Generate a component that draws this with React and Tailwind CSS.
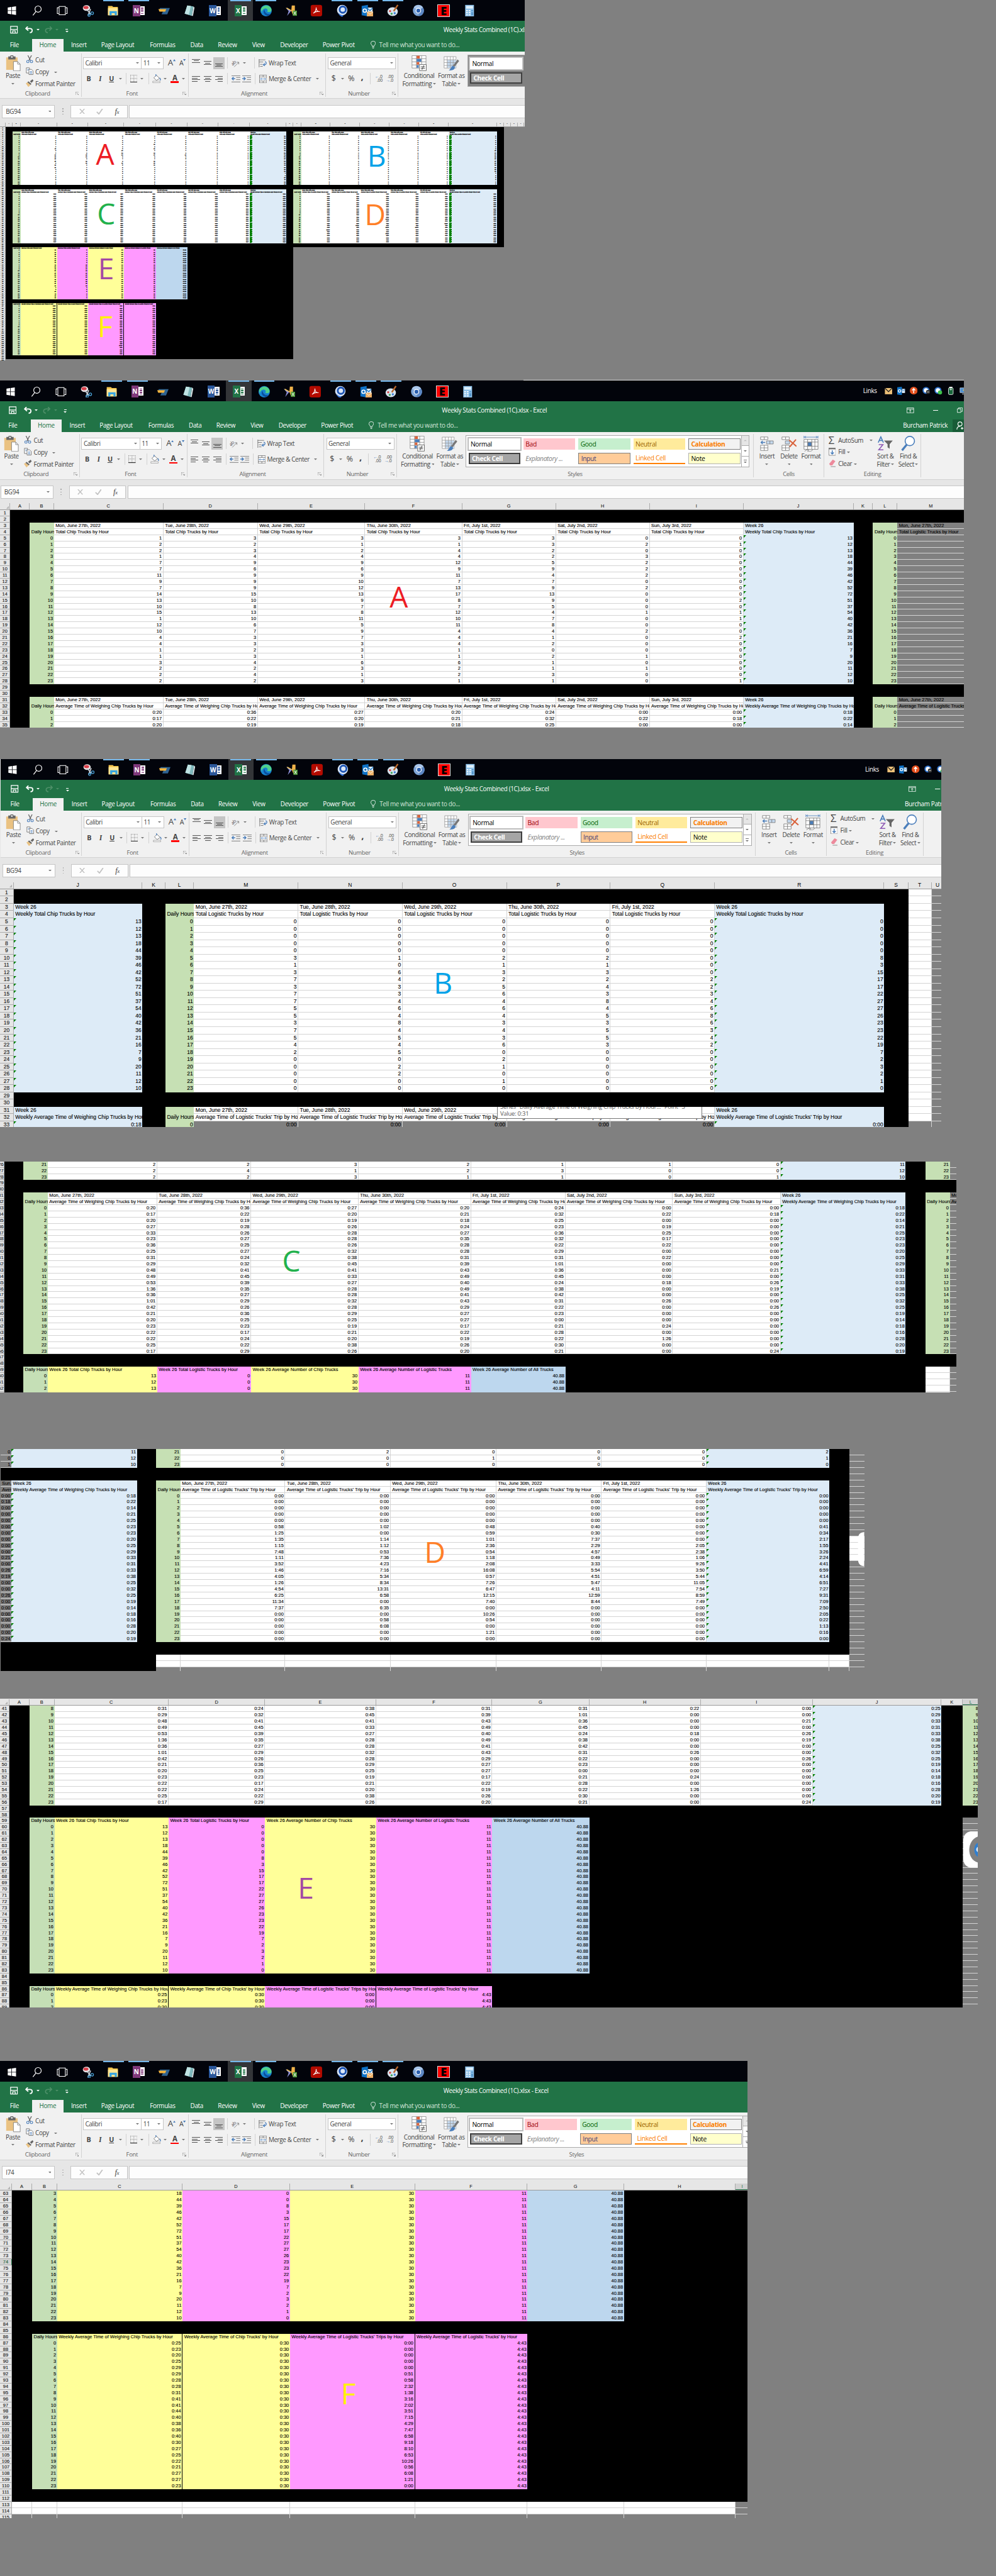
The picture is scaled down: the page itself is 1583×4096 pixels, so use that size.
import React from "react";

/* ---------- workbook data ---------- */
const nums = (s) => s.split(" ");
const mins = (s) => s.split(" ").map((v) => (v.includes(":") ? v : "0:" + v));
const fill = (v) => Array(24).fill(v);

const chip = {
  C: nums("1 2 2 1 7 7 11 9 7 14 13 10 15 1 12 10 4 4 1 1 3 2 2 2"),
  D: nums("3 2 3 4 9 6 9 9 9 15 10 8 13 10 6 7 3 3 2 3 4 2 4 2"),
  E: nums("3 1 2 4 9 6 9 10 12 13 9 7 8 11 5 9 7 3 3 1 6 3 1 3"),
  F: nums("3 1 4 4 12 9 11 7 13 17 8 7 12 10 11 4 4 4 1 1 6 2 2 1"),
  G: nums("3 3 2 2 5 9 4 7 9 13 9 5 4 7 8 4 1 2 0 2 1 1 3 1"),
  H: nums("0 2 0 3 2 2 2 0 2 0 0 0 1 0 0 2 0 0 0 1 0 1 0 0"),
  I: nums("0 1 0 0 0 0 0 0 0 0 2 0 1 1 0 0 2 0 0 0 0 0 0 1"),
  J: nums("13 12 13 18 44 39 46 42 52 72 51 37 54 40 42 36 21 16 7 9 20 11 12 10"),
  M: nums("0 0 0 0 0 3 1 3 7 3 7 7 5 5 3 7 5 4 2 0 0 0 0 0"),
  N: nums("0 0 0 0 0 1 0 6 4 3 3 4 6 4 8 4 5 4 5 0 2 2 0 0"),
  O: nums("0 0 0 0 0 2 1 3 2 5 6 4 6 4 3 4 3 6 0 2 1 0 1 0"),
  P: nums("0 0 0 0 0 2 1 3 2 4 3 8 4 5 3 5 5 3 0 0 0 0 0 0"),
  Q: nums("0 0 0 0 0 0 0 0 2 2 3 4 6 8 6 3 4 2 0 0 0 0 0 0"),
  R: nums("0 0 0 0 0 8 3 15 17 17 22 27 27 26 23 23 22 19 7 2 3 2 1 0"),
};
const avg = {
  C: mins("20 17 20 27 33 23 36 25 31 29 48 49 53 1:36 36 1:01 42 21 20 23 22 22 25 17"),
  D: mins("36 22 19 28 26 27 25 27 24 32 41 45 39 35 27 29 26 36 25 23 17 24 22 29"),
  E: mins("27 20 19 26 28 28 26 32 38 45 41 33 27 28 28 32 28 29 25 19 21 20 38 26"),
  F: mins("20 21 18 24 27 35 28 28 31 39 43 49 40 49 41 43 29 27 27 17 22 19 26 20"),
  G: mins("24 32 25 23 36 32 22 29 31 1:01 36 45 24 38 42 31 22 23 00 21 28 22 30 21"),
  H: mins("00 22 00 19 25 17 22 00 22 00 00 00 18 00 00 26 00 00 00 24 00 1:26 00 00"),
  I: mins("00 18 00 00 00 00 00 00 00 00 21 00 26 19 00 00 26 00 00 00 00 00 00 24"),
  J: mins("18 22 14 21 25 23 23 20 25 29 33 31 33 38 25 32 25 19 14 18 16 28 20 19"),
  M: mins("00 00 00 00 00 58 1:25 1:35 1:15 7:48 1:11 3:52 1:46 4:05 1:26 4:54 6:25 11:34 7:37 00 00 00 00 00"),
  N: mins("00 00 00 00 00 1:02 00 1:14 1:12 53 7:36 4:23 7:16 5:34 8:34 13:31 6:58 00 6:35 00 58 6:08 00 00"),
  O: mins("00 00 00 00 00 48 59 1:01 2:36 54 1:18 2:08 16:08 57 7:26 6:47 12:15 7:40 00 10:26 54 00 1:21 00"),
  P: mins("00 00 00 00 00 40 30 7:37 2:29 4:57 49 3:33 5:54 4:51 5:47 4:11 12:59 8:44 00 00 00 00 00 00"),
  Q: mins("00 00 00 00 00 00 00 00 2:05 2:38 1:06 9:26 3:50 5:44 11:05 7:54 8:59 7:49 00 00 00 00 00 00"),
  R: mins("00 00 00 00 00 41 34 2:17 1:55 3:26 2:24 4:41 6:59 4:14 6:51 7:27 9:31 7:09 2:50 2:05 22 1:13 16 00"),
};
const totals = {
  title: {
    C: "Week 26 Total Chip Trucks by Hour",
    D: "Week 26 Total Logistic Trucks by Hour",
    E: "Week 26 Average Number of Chip Trucks",
    F: "Week 26 Average Number of Logistic Trucks",
    G: "Week 26 Average Number of All Trucks",
  },
  kind: { B: "moss", C: "yellow", D: "pink", E: "yellow", F: "pink", G: "sky" },
  data: { C: chip.J, D: chip.R, E: fill("30"), F: fill("11"), G: fill("40.88") },
};
const weekly = {
  title: {
    C: "Weekly Average Time of Weighing Chip Trucks by Hour",
    D: "Weekly Average Time of Chip Trucks' by Hour",
    E: "Weekly Average Time of Logistic Trucks' Trips by Hour",
    F: "Weekly Average Time of Logistic Trucks' by Hour",
  },
  kind: { B: "moss", C: "yellow", D: "yellow", E: "pink", F: "pink" },
  data: {
    C: mins("25 23 20 25 29 29 28 28 31 41 41 44 40 38 36 40 30 27 25 22 21 27 27 23"),
    D: fill("0:30"),
    E: mins("00 00 00 00 00 51 58 2:32 1:38 3:16 2:02 3:51 7:15 4:29 7:47 6:58 9:18 8:10 6:53 10:26 56 6:08 1:21 00"),
    F: fill("4:43"),
  },
};
const dayOf = {
  C: "Mon, June 27th, 2022", D: "Tue, June 28th, 2022", E: "Wed, June 29th, 2022",
  F: "Thu, June 30th, 2022", G: "Fri, July 1st, 2022", H: "Sat, July 2nd, 2022",
  I: "Sun, July 3rd, 2022", J: "Week 26", M: "Mon, June 27th, 2022",
  N: "Tue, June 28th, 2022", O: "Wed, June 29th, 2022", P: "Thu, June 30th, 2022",
  Q: "Fri, July 1st, 2022", R: "Week 26",
};

function dayBlock(row, top, col, data, label) {
  if ("AKS".includes(col)) return { kind: "black" };
  if (col > "S") return { kind: "white" };
  const h = row - top - 2;
  if ("BL".includes(col))
    return { kind: "green", text: h >= 0 ? String(h) : h === -1 ? "Daily Hours" : "", left: h < 0 };
  const kind = "JR".includes(col) ? "blue" : "white";
  if (h === -2) return { kind, text: dayOf[col], left: true };
  if (h === -1) return { kind, text: label(col), left: true };
  return { kind, text: data[col][h], flag: kind === "blue" };
}

function summaryBlock(row, top, col, block, ruled) {
  const kind = block.kind[col];
  if (!kind) return { kind: "black" };
  const h = row - top - 1;
  if (col === "B") return { kind, text: h < 0 ? "Daily Hours" : String(h), left: h < 0 };
  const rule = ruled && "CE".includes(col);
  if (h < 0) return { kind, text: block.title[col], left: true, rule };
  return { kind, text: block.data[col][h], rule };
}

function cellAt(row, col) {
  if (row >= 3 && row <= 28)
    return dayBlock(row, 3, col, chip, (c) =>
      (c === "J" || c === "R" ? "Weekly " : "") + (c < "K" ? "Total Chip Trucks by Hour" : "Total Logistic Trucks by Hour"));
  if (row >= 31 && row <= 56)
    return dayBlock(row, 31, col, avg, (c) =>
      (c === "J" || c === "R" ? "Weekly " : "") +
      (c < "K" ? "Average Time of Weighing Chip Trucks by Hour" : "Average Time of Logistic Trucks' Trip by Hour"));
  if (row <= 58) return { kind: col > "S" ? "white" : "black" };
  if (col > "K" || row > 112) return { kind: "white" };
  if (row <= 83) return summaryBlock(row, 59, col, totals, false);
  if (row >= 86 && row <= 110) return summaryBlock(row, 86, col, weekly, true);
  return { kind: "black" };
}

/* ---------- sheet ---------- */
const kindClass = {
  black: "bg-black",
  green: "bg-[#c6e0b4]",
  moss: "bg-[#c5dfb6]",
  blue: "bg-[#ddebf7]",
  sky: "bg-[#bdd7ee]",
  yellow: "bg-[#ffff99]",
  pink: "bg-[#ff99ff]",
  white: "bg-white border-r border-b border-[#d4d4d4]",
  plain: "bg-white",
  ghost: "border-b border-[#d4d4d4]",
  blank: "border-b border-[#d4d4d4]",
  column: "border-r border-[#d4d4d4]",
  none: "",
};

function Cell({ cell, width, mini }) {
  const kind = mini && cell.kind === "white" ? "plain" : cell.kind;
  return (
    <div
      className={`relative shrink-0 overflow-hidden whitespace-nowrap ${kindClass[kind]} ${
        mini ? "px-[2px]" : cell.left ? "pl-[3px]" : "pr-[2px]"
      } ${cell.left ? "text-left" : "text-right"} ${cell.rule ? "border-r border-black" : ""}`}
      style={{ width }}
    >
      {kind === "blank" || kind === "none" ? "" : cell.text}
      {cell.flag && (
        <svg className={mini ? "absolute left-[1px] top-0 h-[4px] w-[5px]" : "absolute left-0 top-0 h-[5px] w-[5px]"} viewBox="0 0 5 5" preserveAspectRatio="none">
          <path d={mini ? "M0 0h5v2L3 5H0z" : "M0 0h5L0 5z"} fill="#008000" />
        </svg>
      )}
    </div>
  );
}

function ColumnHeads({ cols, gutter, height, active, mini }) {
  return (
    <div className="flex shrink-0 items-end border-b border-[#9b9b9b] bg-[#e6e6e6]" style={{ height }}>
      <div className={`flex shrink-0 items-end justify-end ${mini ? "h-[7px]" : "h-[12px]"} border-r border-[#ababab] p-[2px]`} style={{ width: gutter }}>
        {!mini && gutter > 10 && (
          <svg className="h-[6px] w-[5px]" viewBox="0 0 5 6"><path d="M5 0v6H0z" fill="#b5b5b5" /></svg>
        )}
      </div>
      {cols.map(([name, width]) => (
        <div
          key={name}
          className={`shrink-0 overflow-hidden border-r border-[#ababab] text-center ${
            mini ? "h-[7px] text-[3px] font-bold leading-[6px]" : "h-[12px] leading-[11px]"
          } ${active === name ? "border-b-2 border-b-[#217346] bg-[#d2d2d2] text-[#217346]" : ""}`}
          style={{ width }}
        >
          {name}
        </div>
      ))}
    </div>
  );
}

function Sheet({ cols, from, to, rowHeight, gutter, override, activeRow, mini, gutterEnd }) {
  const rows = [];
  for (let r = from; r <= to; r++) rows.push(r);
  return (
    <div
      className={`flex flex-col ${mini ? "[-webkit-text-stroke:0.55px_black]" : "[-webkit-text-stroke:0.15px_black]"}`}
      style={{ lineHeight: rowHeight + "px" }}
    >
      {rows.map((r) => (
        <div key={r} className="flex shrink-0" style={{ height: rowHeight }}>
          {gutter > 0 && (
            <div
              className={`flex shrink-0 overflow-hidden border-b border-r border-[#ababab] ${
                activeRow === r ? "border-r-2 border-r-[#217346] bg-[#d2d2d2] text-[#217346]" : "bg-[#e6e6e6] text-[#222]"
              } ${gutterEnd ? "justify-end" : "justify-center"} ${mini ? "border-b-[#d0d0d0]" : ""}`}
              style={{ width: gutter }}
            >
              {r}
            </div>
          )}
          {cols.map(([name, width]) => {
            const base = cellAt(r, name);
            const kind = override ? override(r, name) : null;
            return <Cell key={name} cell={kind ? { ...base, kind, flag: kind === base.kind && base.flag } : base} width={width} mini={mini} />;
          })}
        </div>
      ))}
    </div>
  );
}

/* turns column edges into [name, width] pairs */
function columns(first, edges) {
  return edges.slice(1).map((x, i) => [String.fromCharCode(first.charCodeAt(0) + i), x - edges[i]]);
}

/* ---------- taskbar ---------- */
const Badge = ({ color, letter }) => (
  <span className="flex h-[24px] w-[23px] items-center">
    <span className={`flex h-[22px] w-[14px] items-center justify-center text-[12px] font-bold text-white ${color}`}>{letter}</span>
    <span className="flex h-[17px] w-[9px] flex-col justify-evenly border border-white bg-white px-px">
      <i className={`h-[2px] ${color}`} /><i className={`h-[2px] ${color}`} /><i className={`h-[2px] ${color}`} /><i className={`h-[2px] ${color}`} />
    </span>
  </span>
);
const I24 = ({ children }) => <svg className="h-[24px] w-[24px]" viewBox="0 0 24 24" fill="none">{children}</svg>;

const taskIcons = [
  [<I24><path d="M4 6l7-1v6.500H4zM12 4.800l8-1.200v7.900h-8zM4 12.500h7V19l-7-1zM12 12.500h8v7.900l-8-1.200z" fill="#fff" /></I24>],
  [<I24><circle cx="14" cy="9" r="6" stroke="#fff" strokeWidth="1.4" /><path d="M10 13.500L4 21" stroke="#fff" strokeWidth="1.5" /></I24>],
  [<I24><path d="M6 4h12v16H6zM5 6.500H2.500v11H5M19 6.500h2.500v11H19" stroke="#fff" strokeWidth="1.3" /></I24>],
  [<I24><ellipse cx="9" cy="7" rx="7" ry="5.500" fill="#e8e4e6" /><ellipse cx="8" cy="6" rx="5" ry="3" fill="#d9404a" /><path d="M10 10l7 9M17 9l-5 12" stroke="#cfd6dd" strokeWidth="2" /><circle cx="20" cy="17" r="2.500" stroke="#4ba3d8" strokeWidth="1.600" /><circle cx="14" cy="21" r="2.200" stroke="#4ba3d8" strokeWidth="1.600" /></I24>],
  [<I24><path d="M2 3h8l2 2h9v16H2z" fill="#f5c64f" /><path d="M2 7h19v14H2z" fill="#ffe694" /><path d="M5 21v-8h14v8h-4v-4H9v4z" fill="#37a5e0" /></I24>, 1],
  [<Badge color="bg-[#80397b]" letter="N" />, 1],
  [<I24><path d="M4 7h19l-5 12H7l3-6H2z" fill="#2f6391" /><path d="M1 9h15l-2 5H3z" fill="#f6b53c" /></I24>],
  [<I24><path d="M8 2l12 2-3 18-14-4z" fill="#7fb9bd" /><path d="M8 2l7 1-4 17-8-2z" fill="#bfe3e3" /><path d="M20 4l2 2-3 16-2 0z" fill="#e9eef0" /></I24>],
  [<Badge color="bg-[#2b579a]" letter="W" />],
  [<Badge color="bg-[#217346]" letter="X" />, 2],
  [<I24><circle cx="12" cy="12" r="11" fill="#1683cf" /><path d="M2 9C5 1 18-1 22 8c2 6-3 8-8 6 2-2 1-6-3-6-4 0-8 4-7 9" fill="#4fd08a" /><path d="M9 10c-4 4-1 11 6 12 3 0 5-2 6-4-5 2-12-1-12-8z" fill="#0b4f9e" /></I24>, 3],
  [<I24><path d="M13 2h6v10l4 8h-8l-3-8z" fill="#f0b34a" /><path d="M1 6l11 6-8 10 3-9z" fill="#8d8fd6" /><path d="M3 7l9 5" stroke="#f4c75a" strokeWidth="2" /><path d="M15 12h8v10h-8z" fill="#4e9a3b" /><path d="M17 14l4 6M21 14l-4 6" stroke="#fff" strokeWidth="1.200" /></I24>],
  [<I24><rect x="1" y="1" width="22" height="22" rx="4" fill="#b30b00" /><path d="M6 17c4-2 6-7 5.500-11 0 5 3 8 7 8-4-1-9 0-12.500 3z" stroke="#fff" strokeWidth="1.400" /></I24>],
  [<I24><circle cx="12" cy="11" r="10" fill="#dbe7f7" /><circle cx="13" cy="10" r="6" stroke="#1f56b5" strokeWidth="3.500" /><path d="M4 15c3 5 7 6 11 6l-3 3c-4-1-7-4-8-9z" fill="#3c7be0" /></I24>, 1],
  [<I24><path d="M1 3l12-2v22L1 21z" fill="#0f72c6" /><circle cx="7" cy="12" r="3.200" stroke="#fff" strokeWidth="2" /><path d="M13 6h9v11h-9z" fill="#dcebf8" /><path d="M13 8l4 4 5-5" stroke="#0f72c6" strokeWidth="1.500" /><path d="M11 14h12v9H11z" fill="#f0b268" /><path d="M11 14l6 5 6-5" stroke="#fff" /></I24>, 1],
  [<I24><ellipse cx="11" cy="14" rx="10" ry="8.500" fill="#d7e4ee" /><circle cx="6" cy="13" r="2" fill="#d64545" /><circle cx="9" cy="18" r="2" fill="#3aa655" /><circle cx="15" cy="17" r="2" fill="#3d7fd6" /><path d="M21 1l-8 12" stroke="#b8672c" strokeWidth="3" /></I24>, 1],
  [<I24><circle cx="12" cy="12" r="10.500" fill="#7fa6d8" /><path d="M12 12L3 6a10.500 10.500 0 0118 0z" fill="#a9c6ea" /><path d="M12 12l9-6a10.500 10.500 0 01-8 16.500z" fill="#5c87c4" /><circle cx="12" cy="12" r="4.500" fill="#2b5fae" stroke="#fff" strokeWidth="1.500" /></I24>],
  [<span className="flex h-[24px] w-[24px] items-center justify-center border border-[#ddd] bg-[#f00] text-[22px] font-black leading-none text-black">E</span>],
  [<I24><rect x="4" y="1" width="17" height="22" fill="#8fc2ea" /><path d="M6 3h13v5H6z" fill="#dff0fb" /><path d="M6 11h3v2H6zM11 11h3v2h-3zM6 15h3v2H6zM11 15h3v2h-3zM6 19h3v2H6zM11 19h3v2h-3z" fill="#fff" /><path d="M16 11h3v2h-3zM16 15h3v6h-3z" fill="#4d8fc6" /></I24>],
];

function Taskbar() {
  return (
    <div className="flex h-[40px] shrink-0 items-stretch bg-[#02040b]">
      {taskIcons.map(([icon, mark], i) => (
        <div
          key={i}
          className={`flex shrink-0 flex-col items-center ${i === 0 ? "w-[47px]" : "w-[49px]"} ${mark === 2 ? "bg-[#333538]" : ""}`}
        >
          <div className={`h-[2px] w-[40px] shrink-0 ${mark ? "bg-[#76b9ed]" : ""}`} />
          <div className="flex flex-1 items-center">{icon}</div>
        </div>
      ))}
      <div className="ml-[738px] flex shrink-0 items-center gap-[9px]">
        <span className="w-[33px] text-[12px] tracking-[-0.4px] text-white">Links</span>
        <svg className="h-[12px] w-[15px]" viewBox="0 0 14 12"><path d="M0 0h14v12H0z" fill="#ecc078" /><path d="M0 0l7 7 7-7" stroke="#222" fill="none" strokeWidth="1.500" /></svg>
        <svg className="h-[16px] w-[15px]" viewBox="0 0 15 16"><path d="M0 1l9-1v16l-9-1z" fill="#0f72c6" /><circle cx="4.500" cy="8" r="2.500" fill="none" stroke="#fff" strokeWidth="1.500" /><path d="M9 4h6v8H9z" fill="#dcebf8" /><path d="M9 5l3 3 3-3" stroke="#0f72c6" fill="none" /></svg>
        <svg className="h-[15px] w-[15px]" viewBox="0 0 15 15"><circle cx="7.500" cy="7.500" r="7.500" fill="#e5501e" /><path d="M7.500 12V4M4.500 7l3-3.500 3 3.500" stroke="#fff" strokeWidth="1.800" fill="none" /></svg>
        <svg className="h-[15px] w-[15px]" viewBox="0 0 15 15"><circle cx="7" cy="7" r="5.500" fill="#fff" stroke="#2d6fc8" strokeWidth="2.500" /><circle cx="11" cy="10" r="4" fill="#333" /><path d="M9 10h4" stroke="#fff" /></svg>
        <svg className="h-[15px] w-[15px]" viewBox="0 0 15 15"><circle cx="7" cy="7" r="5.500" fill="#fff" stroke="#2d6fc8" strokeWidth="2.500" /><circle cx="11" cy="11" r="4" fill="#3ec24a" /></svg>
        <svg className="h-[16px] w-[15px]" viewBox="0 0 15 16"><rect x="3" y="2" width="9" height="13" rx="2" fill="#17663a" stroke="#fff" /><path d="M5 0h5v2H5zM5 5h5M7.500 3v4" stroke="#fff" fill="#fff" /></svg>
        <svg className="h-[14px] w-[17px]" viewBox="0 0 17 14"><path d="M1 1h15v9H1z" fill="#4e8fd0" stroke="#cfd6dd" /><path d="M5 12h7v2H5z" fill="#cfd6dd" /><path d="M9 3l-3 3h3l-1 3 4-4H9z" fill="#ffd84a" /></svg>
      </div>
    </div>
  );
}

/* ---------- ribbon pieces ---------- */
const Caret = ({ tone = "#777" }) => (
  <svg className="h-[3px] w-[6px] shrink-0" viewBox="0 0 6 3"><path d="M0 0h6L3 3z" fill={tone} /></svg>
);
const Sep = () => <div className="mx-[5px] h-[22px] w-px shrink-0 bg-[#d2d2d2]" />;
const Slot = ({ className, children }) => <div className={`flex shrink-0 items-center justify-center ${className}`}>{children}</div>;
const Lines = ({ widths, align = "items-start" }) => (
  <div className={`flex w-[15px] flex-col gap-[2px] ${align}`}>
    {widths.map((w, i) => (
      <div key={i} className={`h-px bg-[#555] ${w ? "w-full" : "w-[10px]"}`} />
    ))}
  </div>
);

function Group({ className, label, launcher, children }) {
  return (
    <div className={`flex h-[92px] shrink-0 py-[4px] ${className}`}>
      <div className="flex flex-1 flex-col">
        <div className="h-[71px]">{children}</div>
        <div className="flex h-[14px] items-center text-[11.500px] leading-none tracking-[-0.4px] text-[#666]">
          <span className="flex-1 text-center">{label}</span>
          {launcher && (
            <svg className="mr-[4px] h-[7px] w-[7px]" viewBox="0 0 7 7"><path d="M0 6V0h6M3 3l3.500 3.500M6.500 3.500v3h-3" stroke="#777" fill="none" /></svg>
          )}
        </div>
      </div>
      <div className="w-px bg-[#d2d2d2]" />
    </div>
  );
}

const Stack = ({ className, icon, lines, caret }) => (
  <div className={`flex shrink-0 flex-col items-center pt-[2px] ${className}`}>
    <div className="flex h-[34px] items-center">{icon}</div>
    <div className="flex h-[15px] items-center">{lines[0]}</div>
    <div className="flex h-[16px] items-center gap-[2px]">{lines[1]}{caret && <Caret />}</div>
  </div>
);

const StyleBox = ({ className, children }) => (
  <div className={`flex h-[22px] w-[100px] shrink-0 items-center px-[4px] text-[12.500px] leading-none ${className}`}>{children}</div>
);

function Ribbon({ grayGallery }) {
  return (
    <div className="flex h-[92px] shrink-0 whitespace-nowrap border-b border-[#d2d2d2] bg-[#f1f1f1] text-[12px] tracking-[-0.45px] text-[#444]">
      <Group className="w-[157px]" label="Clipboard" launcher>
        <div className="flex pl-[9px]">
          <Stack
            className="w-[32px]"
            icon={<svg className="h-[31px] w-[29px]" viewBox="0 0 29 31"><path d="M1 4h22v24H1z" fill="#eac282" /><path d="M5 2h4a3 3 0 016 0h4v6H5z" fill="#666" /><circle cx="12" cy="3" r="1.500" fill="#fff" /><path d="M15 12h8l5 5v13H15z" fill="#fff" stroke="#777" /><path d="M23 12v5h5" fill="none" stroke="#777" /></svg>}
            lines={["Paste", ""]}
            caret
          />
          <div className="ml-[8px] flex flex-col pt-[4px]">
            <div className="flex h-[23px] items-start"><Slot className="mr-[3px] w-[16px]"><svg className="h-[15px] w-[15px]" viewBox="0 0 15 15" fill="none"><path d="M4 0l5 10M11 0L6 10" stroke="#666" strokeWidth="1.600" /><circle cx="4" cy="12" r="2.300" stroke="#4a7ebb" strokeWidth="1.400" /><circle cx="11" cy="12" r="2.300" stroke="#4a7ebb" strokeWidth="1.400" /></svg></Slot>Cut</div>
            <div className="flex h-[23px] items-start"><Slot className="mr-[3px] w-[16px]"><svg className="h-[15px] w-[15px]" viewBox="0 0 15 15" fill="#fff" stroke="#666"><path d="M1 1h6v10H1z" /><path d="M6 4h5l3 3v7H6z" /><path d="M8 8h4M8 10h4M8 12h4M3 4h3M3 6h2" stroke="#4a7ebb" /></svg></Slot>Copy<span className="ml-[10px] mt-[8px]"><Caret /></span></div>
            <div className="flex h-[20px] items-start"><Slot className="mr-[3px] w-[16px]"><svg className="h-[15px] w-[15px]" viewBox="0 0 15 15"><path d="M8 4l5-4 2 3-4 4z" fill="#666" /><path d="M5 4l6 5-2 2-6-5z" fill="#666" /><path d="M3 6l6 5-4 4-5-7z" fill="#eac282" /></svg></Slot>Format Painter</div>
          </div>
        </div>
      </Group>
      <Group className="w-[207px]" label="Font" launcher>
        <div className="flex flex-col pl-[3px]">
          <div className="mt-[7px] flex h-[23px] items-center">
            <div className="flex h-[23px] w-[113px] items-center justify-between border border-[#c6c6c6] bg-white pl-[3px] pr-[4px]">Calibri<Caret /></div>
            <div className="-ml-px flex h-[23px] w-[43px] items-center justify-between border border-[#c6c6c6] bg-white pl-[3px] pr-[4px]">11<Caret /></div>
            <Slot className="ml-[5px] w-[22px] text-[16px]">A<svg className="mb-[10px] h-[4px] w-[5px]" viewBox="0 0 5 4"><path d="M0 4h5L2.500 0z" fill="#4a7ebb" /></svg></Slot>
            <Slot className="w-[20px] text-[13px]">A<svg className="mb-[10px] h-[4px] w-[5px]" viewBox="0 0 5 4"><path d="M0 0h5L2.500 4z" fill="#4a7ebb" /></svg></Slot>
          </div>
          <div className="mt-[8px] flex h-[22px] items-center">
            <Slot className="w-[22px] text-[13px] font-bold">B</Slot>
            <Slot className="w-[22px] font-serif text-[14px] font-bold italic">I</Slot>
            <Slot className="w-[22px] text-[13px] font-bold underline">U</Slot>
            <Slot className="w-[12px]"><Caret /></Slot><Sep />
            <Slot className="w-[18px]"><svg className="h-[15px] w-[14px]" viewBox="0 0 14 15" stroke="#777" fill="none"><path d="M.5 0v14M7 0v14M13.500 0v14M0 .5h14M0 7h14" strokeDasharray="1 1" /><path d="M0 14h14" stroke="#333" strokeWidth="1.500" /></svg></Slot>
            <Slot className="w-[14px]"><Caret /></Slot><Sep />
            <Slot className="w-[20px]"><svg className="h-[17px] w-[17px]" viewBox="0 0 17 17"><path d="M3 7l5-5 6 6-6 4z" fill="#fff" stroke="#666" /><path d="M7 4V0M14 7c2 2 2 4 1 5" stroke="#4a7ebb" fill="none" strokeWidth="1.500" /><path d="M1 13.500h14v3H1z" fill="#fff" stroke="#999" /></svg></Slot>
            <Slot className="w-[14px]"><Caret /></Slot>
            <Slot className="w-[22px] flex-col text-[14px] font-bold leading-[13px]">A<i className="h-[3px] w-[16px] bg-[#f00]" /></Slot>
            <Slot className="w-[12px]"><Caret /></Slot>
          </div>
        </div>
      </Group>
      <Group className="w-[264px]" label="Alignment" launcher>
        <div className="flex flex-col pl-[3px]">
          <div className="mt-[7px] flex h-[23px] items-center">
            <Slot className="mb-[8px] w-[22px]"><Lines widths={[1, 0, 1]} align="items-center" /></Slot>
            <Slot className="w-[22px]"><Lines widths={[1, 0, 1]} align="items-center" /></Slot>
            <Slot className="h-[23px] w-[22px] bg-[#c5c5c5] pt-[8px]"><Lines widths={[1, 0, 1]} align="items-center" /></Slot>
            <Sep />
            <Slot className="w-[20px]"><svg className="h-[16px] w-[16px]" viewBox="0 0 16 16"><text x="0" y="9" fontSize="9" transform="rotate(-45 6 8)" fill="#444">ab</text><path d="M5 15L14 6M14 6v4M14 6h-4" stroke="#777" fill="none" /></svg></Slot>
            <Slot className="w-[14px]"><Caret /></Slot><div className="w-[7px]" /><Sep />
            <Slot className="w-[22px]"><svg className="h-[16px] w-[16px]" viewBox="0 0 16 16" fill="none" stroke="#666"><path d="M1 0v16M1 1.500h12M1 5.500h8M3 10h5M3 14h5" /><path d="M12 5c4 0 4 6-2 6M12 8l-3 3 3 2" stroke="#4a7ebb" strokeWidth="1.500" /></svg></Slot>
            <span>Wrap Text</span>
          </div>
          <div className="mt-[8px] flex h-[22px] items-center">
            <Slot className="w-[22px]"><Lines widths={[1, 0, 1, 0]} /></Slot>
            <Slot className="w-[22px]"><Lines widths={[1, 0, 1, 0]} align="items-center" /></Slot>
            <Slot className="w-[22px]"><Lines widths={[1, 0, 1, 0]} align="items-end" /></Slot>
            <Sep />
            <Slot className="w-[21px]"><svg className="h-[13px] w-[17px]" viewBox="0 0 17 13" fill="none" stroke="#666"><path d="M0 .5h17M9 4h8M9 8h8M0 12.500h17" /><path d="M7 6H1M4 3L1 6l3 3" stroke="#4a7ebb" strokeWidth="1.800" /></svg></Slot>
            <Slot className="w-[21px]"><svg className="h-[13px] w-[17px]" viewBox="0 0 17 13" fill="none" stroke="#666"><path d="M0 .5h17M9 4h8M9 8h8M0 12.500h17" /><path d="M0 6h6M3 3l3 3-3 3" stroke="#4a7ebb" strokeWidth="1.800" /></svg></Slot>
            <Sep />
            <Slot className="w-[21px]"><svg className="h-[16px] w-[15px]" viewBox="0 0 15 16" fill="#fff" stroke="#666"><path d="M.5.5h14v15H.5zM.5 4h14M.5 12h14M7.500.5V4M7.500 12v3.500" /><path d="M2 8h11M4.500 6L2.500 8l2 2M10.500 6l2 2-2 2" stroke="#4a7ebb" fill="none" /></svg></Slot>
            <span>Merge &amp; Center</span>
            <Slot className="ml-[6px] w-[12px]"><Caret /></Slot>
          </div>
        </div>
      </Group>
      <Group className="w-[140px]" label="Number" launcher>
        <div className="flex flex-col pl-[4px]">
          <div className="mt-[7px] flex h-[23px] w-[131px] items-center justify-between border border-[#c6c6c6] bg-white pl-[3px] pr-[4px]">General<Caret /></div>
          <div className="mt-[8px] flex h-[22px] items-center">
            <Slot className="w-[22px] text-[15px]">$</Slot><Slot className="w-[12px]"><Caret /></Slot>
            <Slot className="w-[22px] text-[15px]">%</Slot><Slot className="w-[20px] text-[18px] font-bold leading-none"><span className="mb-[9px]">,</span></Slot><Sep />
            <Slot className="w-[22px] flex-col text-[8.500px] leading-[8px]"><span><b className="text-[#4a7ebb]">←</b>.0</span><span className="pl-[4px]">.00</span></Slot>
            <Slot className="w-[20px] flex-col text-[8.500px] leading-[8px]"><span className="pl-[4px]">.00</span><span><b className="text-[#4a7ebb]">→</b>.0</span></Slot>
          </div>
        </div>
      </Group>
      <Group className="w-[688px]" label="Styles">
        <div className="flex pl-[7px]">
          <Stack
            className="w-[66px]"
            icon={<svg className="h-[30px] w-[30px]" viewBox="0 0 30 30" fill="#fff" stroke="#888"><path d="M1 .5h27v24H1zM1 6.500h27M1 12.500h27M1 18.500h27M9.500.5v24M19.500.5v24" /><path d="M10 1h6v5h-6zM10 13h5v5h-5z" fill="#d9623b" stroke="none" /><path d="M10 7h9v5h-9zM10 19h4v5h-4z" fill="#4a7ebb" stroke="none" /><path d="M15.500 17.500h13v12h-13z" stroke="#555" /><path d="M18 22h8M18 25h8M24 19l-4 9" stroke="#333" /></svg>}
            lines={["Conditional", "Formatting"]}
            caret
          />
          <Stack
            className="w-[58px]"
            icon={<svg className="h-[30px] w-[30px]" viewBox="0 0 30 30" fill="#fff" stroke="#999"><path d="M1 2.500h23v22H1z" /><path d="M7 9h17v15H7z" fill="#c5d9ee" stroke="none" /><path d="M1 8.500h23M1 14h23M1 19.500h23M7 2.500v22M13 2.500v22M18.500 2.500v22" fill="none" /><path d="M27 8l3 3-9 11-3-2z" fill="#777" stroke="none" /><path d="M18 20l4 3c-1 5-5 6-12 6 4-2 4-7 8-9z" fill="#4a7ebb" stroke="none" /></svg>}
            lines={["Format as", "Table"]}
            caret
          />
          <div className={`ml-[2px] mt-[2px] flex h-[62px] w-[547px] border border-[#ababab] ${grayGallery ? "bg-[#808080]" : "bg-white"}`}>
            <div className="flex flex-1 flex-wrap content-start gap-x-[6px] gap-y-[6px] pl-[4px] pt-[5px]">
              <StyleBox className="bg-white text-black outline outline-[3px] outline-[#bdbdbd]">Normal</StyleBox>
              <StyleBox className="bg-[#ffc7ce] text-[#9c0006]">Bad</StyleBox>
              <StyleBox className="bg-[#c6efce] text-[#006100]">Good</StyleBox>
              <StyleBox className="bg-[#ffeb9c] text-[#9c6500]">Neutral</StyleBox>
              <StyleBox className="border border-[#7f7f7f] bg-[#f2f2f2] font-bold text-[#fa7d00]">Calculation</StyleBox>
              <StyleBox className="border-[3px] border-double border-[#3f3f3f] bg-[#a5a5a5] font-bold text-white">Check Cell</StyleBox>
              <StyleBox className="italic text-[#7f7f7f]">Explanatory ...</StyleBox>
              <StyleBox className="border border-[#7f7f7f] bg-[#ffcc99] text-[#3f3f76]">Input</StyleBox>
              <StyleBox className="border-b-[3px] border-double border-[#ff8001] text-[#fa7d00]">Linked Cell</StyleBox>
              <StyleBox className="border border-[#b2b2b2] bg-[#ffffcc] text-black">Note</StyleBox>
            </div>
            <div className="flex w-[15px] flex-col border-l border-[#ababab] bg-white">
              <div className="flex flex-1 items-center justify-center bg-[#e6e6e6]"><span className="rotate-180"><Caret tone="#bbb" /></span></div>
              <div className="flex flex-1 items-center justify-center border-y border-[#ababab]"><Caret /></div>
              <div className="flex flex-1 flex-col items-center justify-center gap-[2px]"><i className="h-px w-[6px] bg-[#777]" /><Caret /></div>
            </div>
          </div>
        </div>
      </Group>
      <Group className="w-[136px]" label="Cells">
        <div className="flex pl-[4px]">
          <Stack className="w-[43px]" caret lines={["Insert", ""]} icon={<svg className="h-[28px] w-[27px]" viewBox="0 0 27 28" fill="#fff" stroke="#777"><path d="M1 1h14v5H1zM8 1v5M1 17h14v10H1zM8 17v10M1 22h14" /><path d="M12.500 8.500h13v6h-13zM19 8.500v6" fill="#c5d9ee" /><path d="M10 11.500H2M5 8.500l-3 3 3 3" stroke="#4a7ebb" strokeWidth="1.800" fill="none" /></svg>} />
          <Stack className="w-[42px]" caret lines={["Delete", ""]} icon={<svg className="h-[28px] w-[30px]" viewBox="0 0 30 28" fill="#fff" stroke="#777"><path d="M1 1h14v5H1zM8 1v5M1 17h14v10H1zM8 17v10M1 22h14" /><path d="M7.500 8.500h8v6h-8z" fill="#c5d9ee" /><path d="M15 7l14 12M28 6L16 20" stroke="#d9623b" strokeWidth="2.500" fill="none" /></svg>} />
          <Stack className="w-[43px]" caret lines={["Format", ""]} icon={<svg className="h-[31px] w-[29px]" viewBox="0 0 29 31" fill="#fff" stroke="#777"><path d="M1 7h27v19H1zM8 7v19M16 7v19M22 7v19M1 12h27M1 20h27" /><path d="M8.500 12.500h7v7h-7z" fill="#4a7ebb" /><path d="M1 0v5M28 0v5M2 2.500h25M5 .5l-3 2 3 2M24 .5l3 2-3 2" stroke="#4a7ebb" fill="none" /><path d="M2 30l4-3h4l-2 3h6l4-3" fill="none" /></svg>} />
        </div>
      </Group>
      <Group className="w-[187px]" label="Editing">
        <div className="flex pl-[8px]">
          <div className="flex w-[88px] flex-col pt-[3px]">
            <div className="flex h-[23px] items-start"><span className="w-[19px] text-[20px] leading-[18px]">Σ</span><span className="w-[60px]">AutoSum</span><span className="mt-[8px]"><Caret /></span></div>
            <div className="flex h-[23px] items-start"><svg className="mr-[5px] mt-[1px] h-[15px] w-[14px]" viewBox="0 0 14 15"><path d="M.5.5h13v14H.5z" fill="#fff" stroke="#777" /><path d="M0 0h14v3H0z" fill="#777" /><path d="M7 5v7M4 9l3 3 3-3" stroke="#4a7ebb" strokeWidth="1.800" fill="none" /></svg>Fill<span className="ml-[3px] mt-[8px]"><Caret /></span></div>
            <div className="flex h-[20px] items-start"><svg className="mr-[5px] h-[15px] w-[14px]" viewBox="0 0 14 15"><path d="M8 1l5 3-6 8H3L1 9z" fill="#ed8a9c" /><path d="M4 14.500h10" stroke="#777" /></svg>Clear<span className="ml-[3px] mt-[8px]"><Caret /></span></div>
          </div>
          <Stack className="w-[44px]" caret lines={["Sort &", "Filter"]} icon={<svg className="h-[30px] w-[30px]" viewBox="0 0 30 30"><path d="M1 13L6 2l5 11M3 9h6" stroke="#4a7ebb" strokeWidth="2" fill="none" /><path d="M2 17h8L2 27h9" stroke="#8e5bb5" strokeWidth="2" fill="none" /><path d="M12 9h17l-6 7v9l-4-3v-6z" fill="#666" /></svg>} />
          <Stack className="w-[44px]" caret lines={["Find &", "Select"]} icon={<svg className="h-[30px] w-[28px]" viewBox="0 0 28 30" fill="none" stroke="#4a7ebb"><circle cx="17" cy="10" r="9" strokeWidth="2" fill="#fff" /><path d="M11 17L2 28" strokeWidth="4" /></svg>} />
        </div>
      </Group>
    </div>
  );
}

const tabNames = ["Insert", "Page Layout", "Formulas", "Data", "Review", "View", "Developer", "Power Pivot"];
const tabWidths = ["w-[58px]", "w-[94px]", "w-[78px]", "w-[53px]", "w-[66px]", "w-[54px]", "w-[82px]", "w-[92px]"];

function Chrome({ shift, name, grayGallery }) {
  return (
    <div className={`flex w-[1930px] shrink-0 flex-col font-['Open_Sans',sans-serif] ${shift}`}>
      <Taskbar />
      <div className="flex h-[35px] shrink-0 items-center bg-[#217346]">
        <svg className="ml-[20px] h-[15px] w-[15px]" viewBox="0 0 15 15" fill="none" stroke="#fff" strokeWidth="1.500"><path d="M1 1h13v13H1zM1 7h13M5 14v-4h5v4" /></svg>
        <svg className="ml-[14px] mr-[6px] h-[13px] w-[15px]" viewBox="0 0 15 13" fill="none" stroke="#fff" strokeWidth="2.200"><path d="M5 0L1.500 4 6 8M2 4h7c6 0 6 8 0 8" /></svg><Caret tone="#fff" />
        <svg className="ml-[10px] mr-[6px] h-[13px] w-[15px]" viewBox="0 0 15 13" fill="none" stroke="#4f9069" strokeWidth="2"><path d="M10 0l3.500 4L9 8M13 4H7C0 4 0 12 6 12" /></svg><Caret tone="#4f9069" />
        <span className="ml-[13px] mt-[3px] flex flex-col items-center gap-[3px]"><i className="h-px w-[5px] bg-white" /><Caret tone="#fff" /></span>
        <span className="ml-[723px] w-[896px] text-[12px] tracking-[-0.42px] text-white">Weekly Stats Combined (1C).xlsx - Excel</span>
        <svg className="mr-[37px] h-[11px] w-[14px]" viewBox="0 0 14 11" fill="none" stroke="#fff"><path d="M.5.5h13v10H.5zM.5 3h13M7 9.500V4.500M5 6.500l2-2 2 2" /></svg>
        <svg className="mr-[36px] h-[2px] w-[10px]" viewBox="0 0 10 2"><path d="M0 0h10v1.500H0z" fill="#fff" /></svg>
        <svg className="h-[10px] w-[11px]" viewBox="0 0 11 10" fill="none" stroke="#fff"><path d="M.5 2.500h7v7h-7zM3 2.500v-2h7.500v7H8" /></svg>
      </div>
      <div className="flex h-[24px] shrink-0 items-stretch bg-[#217346] text-[12px] leading-[23px] tracking-[-0.4px] text-white">
        <span className="w-[62px] pl-[19px]">File</span>
        <span className="w-[60px] bg-[#f1f1f1] text-center text-[#217346]">Home</span>
        <span className="w-[15px]" />
        {tabNames.map((t, i) => <span key={t} className={`whitespace-nowrap ${tabWidths[i]}`}>{t}</span>)}
        <svg className="mr-[7px] mt-[4px] h-[15px] w-[10px]" viewBox="0 0 10 15" fill="none" stroke="#fff"><path d="M3 10c0-2-2.500-3-2.500-5.500a4.500 4 0 019 0C9.500 7 7 8 7 10zM3 12h4M3.500 14h3" /></svg>
        <span className="w-[1013px] text-[#d3e6da]">Tell me what you want to do...</span>
        <span className="w-[96px]">Burcham Patrick</span>
        <span className="flex w-[90px] items-center bg-[#185c37] pl-[7px]"><svg className="h-[16px] w-[15px]" viewBox="0 0 15 16" fill="none" stroke="#fff" strokeWidth="1.400"><circle cx="7" cy="5" r="4" /><path d="M1 16c0-5 3-6.500 6-6.500M11 11v5M8.500 13.500h5" /></svg></span>
      </div>
      <Ribbon grayGallery={grayGallery} />
      <div className="flex h-[38px] shrink-0 items-end bg-[#e6e6e6] pb-px pl-[4px] text-[12px] tracking-[-0.4px] text-[#444]">
        <div className="flex h-[26px] w-[102px] items-center justify-between border border-[#c6c6c6] bg-[#fdfdfd] px-[6px]">{name}<Caret /></div>
        <div className="flex h-[26px] w-[30px] flex-col items-center justify-center gap-[3px]"><i className="h-[2px] w-[2px] bg-[#aaa]" /><i className="h-[2px] w-[2px] bg-[#aaa]" /><i className="h-[2px] w-[2px] bg-[#aaa]" /></div>
        <div className="mr-[3px] flex h-[26px] w-[110px] items-center justify-around border border-[#c6c6c6] bg-[#fdfdfd] px-[4px]">
          <svg className="h-[10px] w-[11px]" viewBox="0 0 11 10"><path d="M1 0l9 10M10 0L1 10" stroke="#c3c3c3" strokeWidth="1.800" /></svg>
          <svg className="h-[11px] w-[13px]" viewBox="0 0 13 11" fill="none"><path d="M1 6l4 4 7-10" stroke="#c3c3c3" strokeWidth="2.200" /></svg>
          <span className="font-['Liberation_Serif',serif] text-[15px] italic text-[#444]">f<span className="text-[11px]">x</span></span>
        </div>
        <div className="h-[26px] flex-1 border border-[#c6c6c6] bg-[#fdfdfd]" />
      </div>
    </div>
  );
}

const Letter = ({ className, children }) => (
  <div className={`absolute font-['Open_Sans',sans-serif] text-[56px] leading-none ${className}`}>{children}</div>
);

/* ---------- captures ---------- */
const colsOverview = columns("A", [11.5, 24, 39.5, 110, 170, 239, 301, 361, 421.5, 481, 552.5, 565.5, 581, 637.5, 694, 751.5, 808.5, 865, 958.5, 972, 985, 998, 1011]);
const colsA = columns("A", [20, 57.5, 104, 315, 497, 704, 891, 1072, 1252.5, 1433.5, 1645.5, 1683, 1730, 1860]);
const colsB = columns("J", [26.5, 274.5, 319, 374, 575, 776, 977, 1177, 1378, 1704.5, 1751, 1796, 1820]);
const colsC = columns("A", [8, 45, 92, 303, 484, 691, 908, 1090, 1297, 1505, 1746, 1784, 1831, 1850]);
const colsD = columns("I", [1, 22, 264, 301, 348, 550, 753, 957, 1160, 1362, 1599, 1638, 1670]);
const colsE = columns("A", [18, 57, 105, 325, 511, 725, 949, 1136, 1351, 1567, 1815, 1856, 1888]);
const colsF = columns("A", [23, 62, 110, 352, 559, 800, 1017, 1203, 1418, 1445]);

/* column M shows its two title rows only */
const maskM = (r, c) => {
  if (c !== "M" || cellAt(r, c).kind === "black") return null;
  return cellAt(r, c).left ? "ghost" : "blank";
};
const overviewMask = (r, c) => (r > 112 || c > "S" || (r > 58 && c > "K") ? "none" : null);
const maskB = (r, c) => {
  if (c === "U") return "ghost";
  if (r === 33 && cellAt(r, c).kind === "white") return "column";
  return null;
};
const maskD = (r, c) => {
  if (c === "T") return r >= 40 && r <= 43 ? "white" : "ghost";
  if (c === "I" && cellAt(r, c).kind !== "black") return "ghost";
  if (r === 61 && c > "K") return "column";
  return null;
};
const maskE = (r, c) => (c === "L" && r > 58 ? "ghost" : null);
const maskF = (r, c) => {
  if (r === 115) return "column";
  if (r > 112 && c === "I") return "ghost";
  return null;
};

export default function App() {
  return (
    <div className="h-[4096px] w-[1583px] overflow-hidden bg-[#808080]">
      <div className="flex h-[4968px] w-[1920px] flex-col bg-[#808080] font-['Liberation_Sans',Arial,sans-serif] text-[9px] text-black [zoom:0.82448]">
        <section className="relative flex h-[695px] w-[1011px] flex-col overflow-hidden text-[2.500px]">
          <Chrome shift="" name="BG94" grayGallery />
          <ColumnHeads cols={colsOverview} gutter={11.5} height={16} mini />
          <Sheet cols={colsOverview} from={1} to={113} rowHeight={4} gutter={11.5} override={overviewMask} mini />
          <Letter className="left-[185px] top-[269px] text-[#ed1c24]">A</Letter>
          <Letter className="left-[708px] top-[273px] text-[#00a2e8]">B</Letter>
          <Letter className="left-[187px] top-[384px] text-[#22b14c]">C</Letter>
          <Letter className="left-[703px] top-[386px] text-[#ff7f27]">D</Letter>
          <Letter className="left-[189px] top-[490px] text-[#a349a4]">E</Letter>
          <Letter className="left-[188px] top-[601px] text-[#fff200]">F</Letter>
        </section>

        <div className="ml-[1009px] mt-[37px] h-[2px] w-[849px] shrink-0 bg-[#e0e0e0]" />
        <section className="relative flex h-[670px] w-[1858px] shrink-0 flex-col overflow-hidden">
          <Chrome shift="-ml-[3px]" name="BG94" />
          <ColumnHeads cols={colsA} gutter={20} height={21} />
          <Sheet cols={colsA} from={1} to={35} rowHeight={12} gutter={20} override={maskM} />
          <Letter className="left-[751px] top-[389px] text-[#ed1c24]">A</Letter>
        </section>

        <section className="relative mt-[60px] flex h-[710px] w-[1814px] shrink-0 flex-col overflow-hidden text-[10.300px]">
          <Chrome shift="pl-px bg-[#e6e6e6]" name="BG94" />
          <ColumnHeads cols={colsB} gutter={26.5} height={22} />
          <Sheet cols={colsB} from={1} to={33} rowHeight={14} gutter={26.5} override={maskB} />
          <div className="absolute left-[958px] top-[671px] h-[23px] w-[395px] overflow-hidden whitespace-nowrap border-b border-r border-l border-[#767676] bg-white pl-[5px] font-['Open_Sans',sans-serif] text-[11.500px] leading-[14px] tracking-[-0.3px] text-[#575757]">
            <div className="-mt-[8px]">Series "Daily Average Time of Weighing Chip Trucks by Hour..." Point "3"</div>
            <div>Value: 0:31</div>
          </div>
          <Letter className="left-[836px] top-[404px] text-[#00a2e8]">B</Letter>
        </section>

        <section className="relative mt-[66px] flex h-[446px] w-[1844px] shrink-0 flex-col overflow-hidden">
          <Sheet cols={colsC} from={26} to={63} rowHeight={12} gutter={8} gutterEnd override={maskM} />
          <Letter className="left-[544px] top-[164px] text-[#22b14c]">C</Letter>
        </section>

        <section className="relative mt-[109px] flex h-[428px] w-[1666px] shrink-0 flex-col overflow-hidden pl-px">
          <Sheet cols={colsD} from={26} to={61} rowHeight={12} gutter={0} override={maskD} />
          <svg className="absolute left-[1652px] top-[160px] h-[66px] w-[14px]" viewBox="0 0 14 66"><path d="M14 0C6 1 3 4 2 12v42c1 8 4 11 12 12V48C11 40 11 28 14 20z" fill="#fff" /></svg>
          <Letter className="left-[818px] top-[171px] text-[#ff7f27]">D</Letter>
        </section>

        <section className="relative mt-[53px] flex h-[596px] w-[1885px] shrink-0 flex-col overflow-hidden">
          <ColumnHeads cols={colsE} gutter={18} height={14} active="L" />
          <Sheet cols={colsE} from={41} to={89} rowHeight={12} gutter={18} override={maskE} />
          <svg className="absolute left-[1857px] top-[256px] h-[70px] w-[28px]" viewBox="0 0 28 70">
            <path d="M14 0h14v70H14C4 68 1 62 0 54V16C1 8 4 2 14 0z" fill="#fff" />
            <path d="M28 10C6 18 6 54 28 60z" fill="#808080" />
            <path d="M28 22c-9 4-9 22 0 27z" fill="#2f7fd0" />
            <path d="M28 30c-4 2-4 8 0 10z" fill="#dfefff" />
          </svg>
          <Letter className="left-[574px] top-[337px] text-[#a349a4]">E</Letter>
        </section>

        <section className="relative mt-[103px] flex h-[882px] w-[1441px] shrink-0 flex-col overflow-hidden">
          <Chrome shift="" name="I74" />
          <ColumnHeads cols={colsF} gutter={23} height={21} active="I" />
          <Sheet cols={colsF} from={63} to={115} rowHeight={12} gutter={23} override={maskF} activeRow={74} />
          <Letter className="left-[657px] top-[613px] text-[#fff200]">F</Letter>
        </section>
      </div>
    </div>
  );
}
